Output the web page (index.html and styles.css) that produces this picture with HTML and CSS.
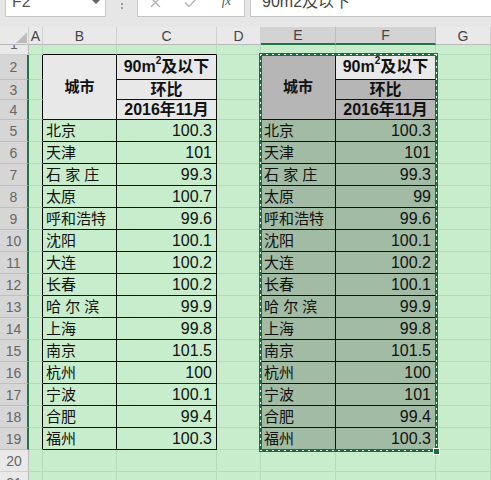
FILE: index.html
```html
<!DOCTYPE html>
<html lang="zh">
<head>
<meta charset="utf-8">
<link rel="stylesheet" href="styles.css">
</head>
<body>
<div class="topbar">
  <div class="namebox"><span>F2</span><span class="caret"></span></div>
  <div class="grip"><span class="dot"></span><span class="dot"></span></div>
  <div class="fxbox">
    <span class="slot"><svg width="11" height="11" viewBox="0 0 11 11"><path d="M1 1L10 10M10 1L1 10" stroke="#b4b4b4" stroke-width="1.4" fill="none"/></svg></span>
    <span class="slot"><svg width="14" height="11" viewBox="0 0 14 11"><path d="M1 5.5L5 9.5L13 1" stroke="#b4b4b4" stroke-width="1.4" fill="none"/></svg></span>
    <span class="slot fx">fx</span>
  </div>
  <div class="formula">90m2及以下</div>
</div>
<div class="band"></div>
<div class="sheet">
  <div class="corner"><span class="tri"></span></div><div class="ch">A</div><div class="ch">B</div><div class="ch">C</div><div class="ch">D</div><div class="ch sel">E</div><div class="ch sel">F</div><div class="ch">G</div>

  <div class="rh r1"><span>1</span></div><div class="c"></div><div class="c tt"></div><div class="c tt"></div><div class="c"></div><div class="c tt"></div><div class="c tt"></div><div class="c"></div>

  <div class="rh sel">2</div><div class="c tl"></div><div class="t hd span3">城市</div><div class="t hd">90m<span class="sup">2</span>及以下</div><div class="c tl"></div><div class="t hd hds span3">城市</div><div class="t hd">90m<span class="sup">2</span>及以下</div><div class="c"></div>
  <div class="rh sel">3</div><div class="c tl"></div><div class="t hd">环比</div><div class="c tl"></div><div class="t hd hds">环比</div><div class="c"></div>
  <div class="rh sel">4</div><div class="c tl"></div><div class="t hd">2016年11月</div><div class="c tl"></div><div class="t hd hds">2016年11月</div><div class="c"></div>

  <div class="rh sel">5</div><div class="c tl"></div><div class="t name">北京</div><div class="t num">100.3</div><div class="c tl"></div><div class="t sd name">北京</div><div class="t sd num">100.3</div><div class="c"></div>
  <div class="rh sel">6</div><div class="c tl"></div><div class="t name">天津</div><div class="t num">101</div><div class="c tl"></div><div class="t sd name">天津</div><div class="t sd num">101</div><div class="c"></div>
  <div class="rh sel">7</div><div class="c tl"></div><div class="t name">石 家 庄</div><div class="t num">99.3</div><div class="c tl"></div><div class="t sd name">石 家 庄</div><div class="t sd num">99.3</div><div class="c"></div>
  <div class="rh sel">8</div><div class="c tl"></div><div class="t name">太原</div><div class="t num">100.7</div><div class="c tl"></div><div class="t sd name">太原</div><div class="t sd num">99</div><div class="c"></div>
  <div class="rh sel">9</div><div class="c tl"></div><div class="t name">呼和浩特</div><div class="t num">99.6</div><div class="c tl"></div><div class="t sd name">呼和浩特</div><div class="t sd num">99.6</div><div class="c"></div>
  <div class="rh sel">10</div><div class="c tl"></div><div class="t name">沈阳</div><div class="t num">100.1</div><div class="c tl"></div><div class="t sd name">沈阳</div><div class="t sd num">100.1</div><div class="c"></div>
  <div class="rh sel">11</div><div class="c tl"></div><div class="t name">大连</div><div class="t num">100.2</div><div class="c tl"></div><div class="t sd name">大连</div><div class="t sd num">100.2</div><div class="c"></div>
  <div class="rh sel">12</div><div class="c tl"></div><div class="t name">长春</div><div class="t num">100.2</div><div class="c tl"></div><div class="t sd name">长春</div><div class="t sd num">100.1</div><div class="c"></div>
  <div class="rh sel">13</div><div class="c tl"></div><div class="t name">哈 尔 滨</div><div class="t num">99.9</div><div class="c tl"></div><div class="t sd name">哈 尔 滨</div><div class="t sd num">99.9</div><div class="c"></div>
  <div class="rh sel">14</div><div class="c tl"></div><div class="t name">上海</div><div class="t num">99.8</div><div class="c tl"></div><div class="t sd name">上海</div><div class="t sd num">99.8</div><div class="c"></div>
  <div class="rh sel">15</div><div class="c tl"></div><div class="t name">南京</div><div class="t num">101.5</div><div class="c tl"></div><div class="t sd name">南京</div><div class="t sd num">101.5</div><div class="c"></div>
  <div class="rh sel">16</div><div class="c tl"></div><div class="t name">杭州</div><div class="t num">100</div><div class="c tl"></div><div class="t sd name">杭州</div><div class="t sd num">100</div><div class="c"></div>
  <div class="rh sel">17</div><div class="c tl"></div><div class="t name">宁波</div><div class="t num">100.1</div><div class="c tl"></div><div class="t sd name">宁波</div><div class="t sd num">101</div><div class="c"></div>
  <div class="rh sel">18</div><div class="c tl"></div><div class="t name">合肥</div><div class="t num">99.4</div><div class="c tl"></div><div class="t sd name">合肥</div><div class="t sd num">99.4</div><div class="c"></div>
  <div class="rh sel">19</div><div class="c tl"></div><div class="t name">福州</div><div class="t num">100.3</div><div class="c tl"></div><div class="t sd name">福州</div><div class="t sd num">100.3</div><div class="c"></div>

  <div class="rh">20</div><div class="c"></div><div class="c"></div><div class="c"></div><div class="c"></div><div class="c"></div><div class="c"></div><div class="c"></div>
  <div class="rh">21</div><div class="c"></div><div class="c"></div><div class="c"></div><div class="c"></div><div class="c"></div><div class="c"></div><div class="c"></div>

  <div class="ants"></div>
  <div class="handle"></div>
</div>
</body>
</html>
```
FILE: styles.css
```css
* { box-sizing: border-box; }
html, body { margin: 0; padding: 0; }
body {
  width: 491px;
  height: 480px;
  overflow: hidden;
  background: #e6e6e6;
  font-family: "Liberation Sans", "Noto Sans CJK SC", sans-serif;
}

/* formula bar */
.topbar {
  height: 17px;
  display: flex;
  align-items: flex-start;
  overflow: hidden;
  background: #e6e6e6;
}
.namebox {
  margin: -8px 0 0 5px;
  width: 101px;
  height: 25px;
  background: #fff;
  border: 1px solid #c6c6c6;
  display: flex;
  justify-content: space-between;
  align-items: flex-start;
  padding: 0 5px 0 6px;
  font-size: 16px;
  line-height: 18px;
  color: #555;
}
.caret {
  width: 0;
  height: 0;
  margin-top: 7px;
  border-left: 4px solid transparent;
  border-right: 4px solid transparent;
  border-top: 4px solid #666;
}
.grip {
  width: 31px;
  display: flex;
  flex-direction: column;
  align-items: center;
  gap: 2px;
  padding-top: 3px;
}
.dot { width: 2px; height: 2px; background: #a0a0a0; }
.fxbox {
  margin-top: -8px;
  width: 108px;
  height: 25px;
  background: #fff;
  border: 1px solid #c6c6c6;
  display: flex;
  align-items: flex-start;
}
.slot {
  width: 36px;
  display: flex;
  justify-content: center;
  padding-top: 4px;
}
.fx {
  font-family: "Liberation Serif", serif;
  font-style: italic;
  font-size: 13px;
  line-height: 12px;
  color: #555;
  padding-top: 2px;
}
.formula {
  margin: -8px 0 0 5px;
  flex: 1;
  height: 25px;
  background: #fff;
  border: 1px solid #c6c6c6;
  border-right: none;
  padding-left: 11px;
  font-size: 16px;
  line-height: 18px;
  color: #444;
}
.band { height: 10px; background: #e6e6e6; }

/* sheet */
.sheet {
  position: relative;
  display: grid;
  grid-template-columns: 29px 14px 74px 100px 44px 75px 100px 55px;
  grid-template-rows: 18px 10px 25px 20px 20px repeat(17, 22px);
  background: #c7edcc;
}
.corner {
  background: #e9e9e9;
  border-right: 1px solid #cfcfcf;
  border-bottom: 1px solid #b9b9b9;
  display: flex;
  justify-content: flex-end;
  align-items: flex-end;
  padding: 0 1px 1px 0;
}
.tri {
  width: 0;
  height: 0;
  border-left: 11px solid transparent;
  border-bottom: 11px solid #bdbdbd;
}
.ch {
  background: #e9e9e9;
  border-right: 1px solid #d0d0d0;
  border-bottom: 1px solid #b9b9b9;
  display: flex;
  justify-content: center;
  align-items: center;
  font-size: 14px;
  color: #444;
}
.ch.sel {
  background: #d3d3d3;
  border-bottom: 2px solid #217346;
  border-right-color: #bdbdbd;
}
.rh {
  background: #e9e9e9;
  border-right: 1px solid #b9b9b9;
  border-bottom: 1px solid #d0d0d0;
  display: flex;
  justify-content: center;
  align-items: center;
  font-size: 14px;
  color: #666;
  overflow: hidden;
}
.rh.sel {
  background: #d6d6d6;
  border-right: 2px solid #217346;
  border-bottom-color: #bfbfbf;
}
.rh.r1 { align-items: flex-end; }
.rh.r1 span { line-height: 20px; }

.c {
  border-right: 1px solid #b6dbbb;
  border-bottom: 1px solid #b6dbbb;
}
.c.tl { border-right-color: #000; }
.c.tt { border-bottom-color: #000; }

.t {
  border-right: 1px solid #111;
  border-bottom: 1px solid #111;
  display: flex;
  align-items: center;
  white-space: nowrap;
  overflow: hidden;
  color: #111;
}
.span3 { grid-row: span 3; }
.hd {
  background: #e8e8e8;
  justify-content: center;
  font-weight: bold;
  font-size: 16px;
  line-height: 20px;
}
.hd.span3 { font-size: 15px; }
.hds { background: #b6b6b6; }
.sup {
  font-size: 10px;
  position: relative;
  top: -6px;
}
.name {
  font-size: 15px;
  line-height: 20px;
  padding-left: 3px;
}
.num {
  font-size: 16px;
  line-height: 20px;
  justify-content: flex-end;
  padding-right: 4px;
}
.sd { background: #a2bba4; }

/* copy selection (marching ants) */
.ants {
  position: absolute;
  left: 259px;
  top: 26px;
  width: 179px;
  height: 399px;
  border: 3px solid #1d6b3e;
  pointer-events: none;
}
.ants::before {
  content: "";
  position: absolute;
  left: -2px;
  right: -2px;
  top: -2px;
  bottom: -2px;
  background:
    repeating-linear-gradient(90deg, #fff 0 2px, transparent 2px 6px) left top / 100% 1px no-repeat,
    repeating-linear-gradient(90deg, #fff 0 2px, transparent 2px 6px) left bottom / 100% 1px no-repeat;
}
.ants::after {
  content: "";
  position: absolute;
  left: -2px;
  right: -2px;
  top: -2px;
  bottom: -2px;
  background:
    repeating-linear-gradient(180deg, #fff 0 2px, transparent 2px 6px) left top / 1px 100% no-repeat,
    repeating-linear-gradient(180deg, #fff 0 2px, transparent 2px 6px) right top / 1px 100% no-repeat;
}
.handle {
  position: absolute;
  left: 433px;
  top: 421px;
  width: 7px;
  height: 7px;
  background: #1d6b3e;
  border: 1px solid #fff;
}
```
